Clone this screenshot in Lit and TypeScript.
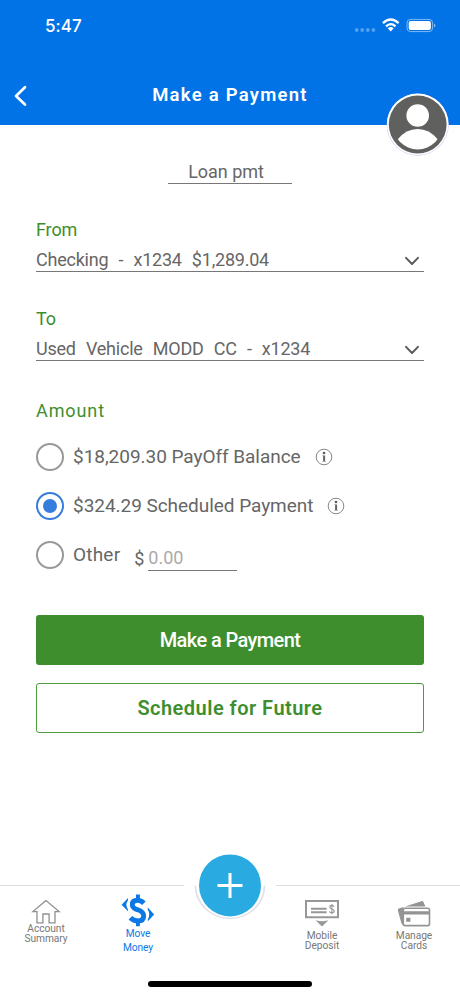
import { LitElement, html, css, svg } from "lit";
import { customElement, property } from "lit/decorators.js";
import { classMap } from "lit/directives/class-map.js";

const chevronDown = html`<svg width="16" height="10" viewBox="0 0 16 10" fill="none" stroke="#58585a" stroke-width="1.9" stroke-linecap="round" stroke-linejoin="round"><path d="M2 1.8 8 8 14 1.8" /></svg>`;

const infoIcon = html`<svg width="18" height="18" viewBox="0 0 18 18"><circle cx="9" cy="9" r="7.8" fill="none" stroke="#7c7c7c" stroke-width="0.9" /><circle cx="9" cy="5" r="1.35" fill="#5c5c5c" /><path d="M7.3 7.4H10.1V12.9H10.9V13.6H7.3V12.9H8.1V8.1H7.3Z" fill="#646464" /></svg>`;

const icons: Record<string, unknown> = {
  home: svg`<svg width="30" height="26" viewBox="0 0 30 26" fill="none" stroke="#8f8f8f" stroke-width="1.3" stroke-linejoin="miter"><path d="M15 1.6 1.9 12.6H6V23.8H11.9V15H18.1V23.8H24V12.6H28.1Z" /></svg>`,
  money: svg`<svg width="34" height="33" viewBox="0 0 34 33" fill="#0b78e6"><path d="M7 4 0.6 10.8 7 17.2V15.4Q3.8 10.8 7 6.2Z" /><path d="M26.8 13.6 33.2 20.4 26.8 27.2V25.2Q29.8 20.4 26.8 15.8Z" /><path d="M15 0.4H18.9V4.6H15ZM15 28H18.9V32.2H15Z" /><path d="M22.9 9.2Q20 6.2 16.4 6.2 11.3 6.2 11.3 10.7 11.3 14.1 16.9 15.8 22.7 17.8 22.7 22 22.7 26.9 17 26.9 12.5 26.9 9.4 23.7" fill="none" stroke="#0b78e6" stroke-width="4.9" /></svg>`,
  deposit: svg`<svg width="34" height="27" viewBox="0 0 34 27" fill="#979797"><path fill-rule="evenodd" d="M0 0H34V18.2H0ZM2 2V16.2H32V2Z" /><path d="M6 7.8H21.6V9.7H6ZM6 11.3H21.6V13.2H6ZM10.6 20.2Q17 22.2 23.4 20.2L17 26.4Z" /><path d="M29.1 6.7Q28.5 5.4 26.9 5.4 24.8 5.4 24.8 7.1 24.8 8.5 26.9 9 29.2 9.6 29.2 11.1 29.2 12.8 26.9 12.8 25 12.8 24.5 11.3M26.9 4V14.2" fill="none" stroke="#979797" stroke-width="1.1" /></svg>`,
  cards: svg`<svg width="34" height="27" viewBox="0 0 34 27"><path d="M1.8 8.6 24.4 1.2Q26 0.8 26.6 2.2L28.4 6.6H8Q6 6.6 6 9V24.6Q4.8 24.6 4.4 23.2L0.9 10.6Q0.6 9.1 1.8 8.6Z" fill="#949494" /><rect x="6.3" y="8.2" width="26.2" height="17.4" rx="1.8" fill="#fff" stroke="#949494" stroke-width="1.6" /><path d="M6.2 11.2H32.6V14.6H6.2ZM9.2 17.8H13.4V21.8H9.2Z" fill="#949494" /></svg>`,
};

@customElement("status-bar")
export class StatusBar extends LitElement {
  static styles = css`
    :host { display: flex; height: 50px; padding: 0 24px 0 45px; align-items: flex-start; justify-content: space-between; color: #fff; }
    .time { margin-top: 14px; font: 500 17px/24px Inter, sans-serif; letter-spacing: 0.1px; }
    .signals { display: flex; margin-top: 17px; height: 16px; align-items: center; }
    svg { display: block; }
  `;
  render() {
    return html`<span class="time">5:47</span>
      <span class="signals">
        <svg width="82" height="16" viewBox="0 0 82 16" fill="#fff">
          <g opacity=".32"><circle cx="2.7" cy="13" r="1.9" /><circle cx="8.2" cy="13" r="1.9" /><circle cx="13.8" cy="13" r="1.9" /><circle cx="19.4" cy="13" r="1.9" /></g>
          <g fill="none" stroke="#fff" stroke-width="2.3"><path d="M28.9 6.1Q36.7-1.2 44.6 6.1M32 9.3Q36.7 5 41.5 9.3" /></g>
          <path d="M33.7 11.2Q36.7 8.8 39.7 11.2L36.7 14.4Z" />
          <rect x="53" y="2.4" width="25.6" height="12.2" rx="3.6" fill="none" stroke="#fff" stroke-opacity=".5" stroke-width="1" />
          <rect x="54.7" y="4.1" width="22.2" height="8.8" rx="2" /><path d="M80 6.5Q82.8 8.5 80 10.5Z" opacity=".55" />
        </svg>
      </span>`;
  }
}

@customElement("account-select")
export class AccountSelect extends LitElement {
  @property() label = "";
  @property() value = "";
  static styles = css`
    :host { display: block; height: 89px; font: 400 18px/24px Roboto, sans-serif; }
    .label { color: #3e8e2d; height: 30px; letter-spacing: -0.1px; }
    .row { display: flex; justify-content: space-between; align-items: flex-start; height: 23px; border-bottom: 1px solid #777; color: #666; }
    .value { word-spacing: 5.9px; letter-spacing: -0.22px; white-space: nowrap; }
    svg { display: block; margin: 8px 4px 0 0; }
  `;
  render() {
    return html`<div class="label">${this.label}</div>
      <div class="row"><span class="value">${this.value}</span>${chevronDown}</div>`;
  }
}

@customElement("nav-item")
export class NavItem extends LitElement {
  @property() icon = "";
  @property() first = "";
  @property() second = "";
  static styles = css`
    :host { display: flex; flex-direction: column; align-items: center; width: 92px; color: #777; font: 400 10.2px/10px Roboto, sans-serif; letter-spacing: -0.05px; text-align: center; }
    svg { display: block; }
    .art.home { padding-top: 13px; }
    .art.money { padding-top: 8px; }
    .art.deposit, .art.cards { padding-top: 14px; }
    .text { white-space: nowrap; }
    .text.home { margin-top: -1px; }
    .text.money { line-height: 13.5px; color: #0b78e6; }
    .text.deposit, .text.cards { margin-top: 4px; }
  `;
  render() {
    const kind = { [this.icon]: true };
    return html`<div class=${classMap({ art: true, ...kind })}>${icons[this.icon]}</div>
      <div class=${classMap({ text: true, ...kind })}>${this.first}<br />${this.second}</div>`;
  }
}

@customElement("app-root")
export class AppRoot extends LitElement {
  static styles = css`
    :host { display: flex; flex-direction: column; position: relative; width: 460px; height: 996px; background: #fff; overflow: hidden; font-family: Roboto, sans-serif; }
    * { box-sizing: border-box; }
    svg { display: block; }
    .header { height: 125px; background: #0173e6; color: #fff; flex: none; }
    .bar { display: grid; grid-template-columns: 60px 1fr 60px; height: 75px; padding-top: 33px; align-items: start; }
    .back { padding: 2px 0 0 12.5px; }
    .title { text-align: center; font-weight: 600; font-size: 18.5px; line-height: 24px; letter-spacing: 1.25px; }
    .avatar { position: absolute; left: 386px; top: 93px; }
    main { padding: 35px 36px 0; height: 760px; flex: none; }
    .memo { width: 124px; height: 24px; margin: 0 auto 34px; border-bottom: 1px solid #777; text-align: center; color: #666; font-size: 18px; line-height: 24px; padding-right: 8px; letter-spacing: -0.05px; }
    .amount { color: #3e8e2d; font-size: 18px; line-height: 24px; letter-spacing: 0.9px; margin-top: 3px; }
    .options { display: flex; flex-direction: column; gap: 21px; margin-top: 20px; }
    .option { display: flex; height: 28px; align-items: center; color: #666; font-size: 19px; white-space: nowrap; letter-spacing: -0.04px; }
    .caption { height: 24px; line-height: 24px; }
    .other { letter-spacing: 0.2px; }
    .radio { width: 28px; height: 28px; border-radius: 50%; border: 2.3px solid #999; display: grid; place-items: center; margin-right: 9px; }
    .radio.on { border-color: #347ddd; }
    .radio.on::after { content: ""; width: 14px; height: 14px; border-radius: 50%; background: #347ddd; }
    .info { margin-left: 14px; }
    .dollar { margin: 6px 4px 0 14px; font-size: 18px; }
    .field { width: 89px; height: 25px; margin-top: 6px; border-bottom: 1px solid #777; color: #aaa; font-size: 18px; line-height: 24px; }
    .btn { height: 50px; border-radius: 3px; display: flex; align-items: center; justify-content: center; font-size: 20px; font-weight: 500; }
    .primary { margin-top: 46px; background: #3e8e2d; color: #fff; letter-spacing: -0.6px; }
    .outline { margin-top: 17.5px; border: 1px solid #4d9a3d; color: #3e8e2d; letter-spacing: 0.48px; font-weight: 600; }
    footer { display: flex; flex-direction: column; height: 111px; }
    .divider { display: flex; justify-content: space-between; }
    .line { width: 184px; height: 1px; background: #dcdde2; }
    .tabs { display: flex; }
    .gap { width: 92px; }
    .add { position: absolute; left: 192px; top: 850px; }
    .home-indicator { width: 164px; height: 6px; border-radius: 3px; background: #000; position: absolute; left: 148px; top: 981px; }
  `;
  render() {
    return html`
      <div class="header">
        <status-bar></status-bar>
        <div class="bar">
          <div class="back"><svg width="15" height="22" viewBox="0 0 15 22" fill="none" stroke="#fff" stroke-width="2.7" stroke-linecap="round" stroke-linejoin="round"><path d="M12 2.2 3 11 12 19.6" /></svg></div>
          <div class="title">Make a Payment</div>
        </div>
      </div>
      <main>
        <div class="memo">Loan pmt</div>
        <account-select label="From" value="Checking - x1234 $1,289.04"></account-select>
        <account-select label="To" value="Used Vehicle MODD CC - x1234"></account-select>
        <div class="amount">Amount</div>
        <div class="options">
          <div class="option"><span class="radio"></span><span class="caption">$18,209.30 PayOff Balance</span><span class="info">${infoIcon}</span></div>
          <div class="option"><span class="radio on"></span><span class="caption">$324.29 Scheduled Payment</span><span class="info">${infoIcon}</span></div>
          <div class="option"><span class="radio"></span><span class="caption other">Other</span><span class="dollar">$</span><span class="field">0.00</span></div>
        </div>
        <div class="btn primary">Make a Payment</div>
        <div class="btn outline">Schedule for Future</div>
      </main>
      <footer>
        <div class="divider"><span class="line"></span><span class="line"></span></div>
        <div class="tabs">
          <nav-item icon="home" first="Account" second="Summary"></nav-item>
          <nav-item icon="money" first="Move" second="Money"></nav-item>
          <div class="gap"></div>
          <nav-item icon="deposit" first="Mobile" second="Deposit"></nav-item>
          <nav-item icon="cards" first="Manage" second="Cards"></nav-item>
        </div>
      </footer>
      <svg class="avatar" width="64" height="64" viewBox="0 0 64 64">
        <defs><clipPath id="face"><circle cx="31.7" cy="31.5" r="24.9" /></clipPath></defs>
        <circle cx="31.7" cy="31.7" r="31" fill="#c9c9f2" /><circle cx="31.7" cy="31.3" r="30.7" fill="#fff" /><circle cx="31.7" cy="31.5" r="28.9" fill="#60605f" />
        <circle cx="31.7" cy="22.5" r="11.3" fill="#fff" />
        <path clip-path="url(#face)" d="M11.8 46.3Q20 36 31.7 36 43.4 36 51.6 46.3V60H11.8Z" fill="#fff" />
      </svg>
      <svg class="add" width="76" height="72" viewBox="0 0 76 72">
        <path d="M2.5 35.4A35.5 33.8 0 0 0 73.5 35.4Z" fill="#e1e2e9" />
        <path d="M4.2 34.8A33.8 33 0 0 0 71.8 34.8Z" fill="#fff" />
        <circle cx="38" cy="35.4" r="31" fill="#29aae1" />
        <path d="M38 23V48M25.5 35.5H50.5" stroke="#fff" stroke-width="3" />
      </svg>
      <div class="home-indicator"></div>`;
  }
}
